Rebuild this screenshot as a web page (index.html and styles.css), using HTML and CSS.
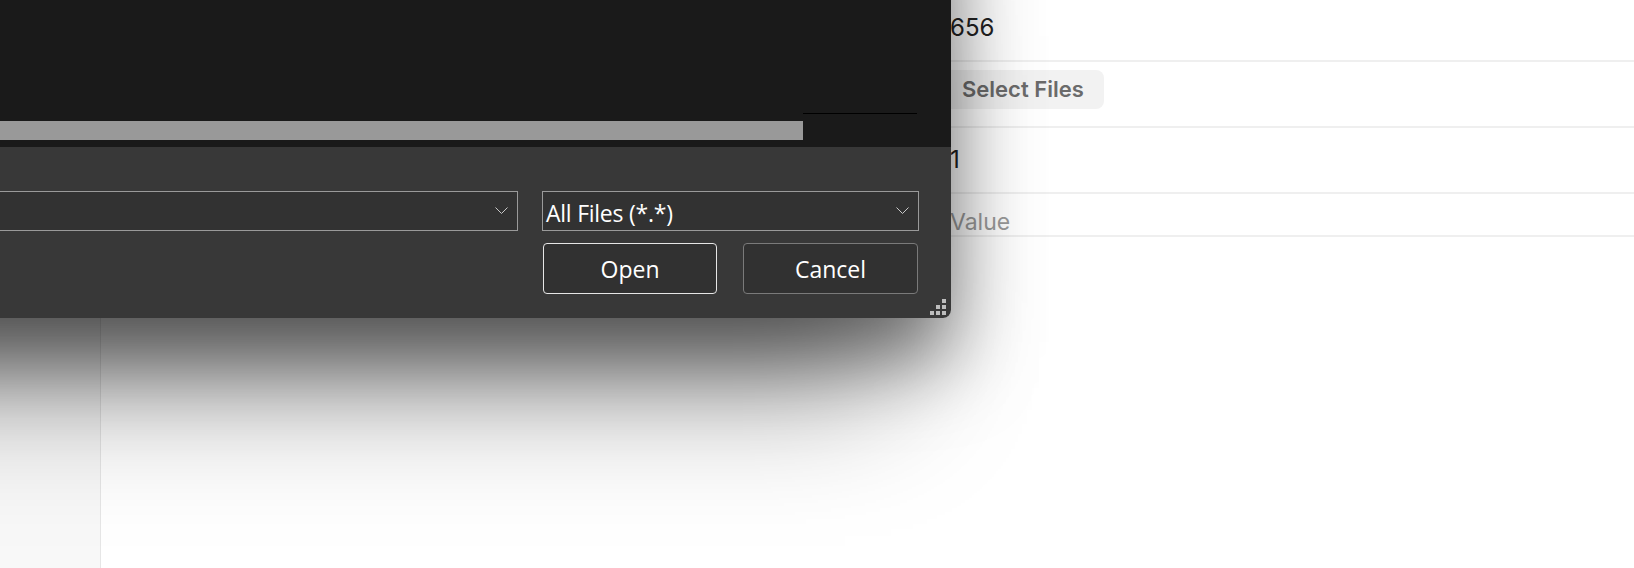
FILE: index.html
```html
<!DOCTYPE html>
<html lang="en">
<head>
<meta charset="utf-8">
<title>Open</title>
<link rel="stylesheet" href="styles.css">
</head>
<body>
<div class="page">
  <aside class="sidebar"></aside>
  <main class="main">
    <div class="field">
      <div class="field-label"></div>
      <div class="field-value field-text">656</div>
    </div>
    <div class="field field-upload">
      <div class="field-label"></div>
      <div class="field-value"><button class="select-btn">Select Files</button></div>
    </div>
    <div class="field field-count">
      <div class="field-label"></div>
      <div class="field-value field-text">1</div>
    </div>
    <div class="field field-input">
      <div class="field-label"></div>
      <div class="field-value field-text placeholder">Value</div>
    </div>
  </main>
</div>

<div class="dialog">
  <div class="file-list">
    <div class="hscroll">
      <div class="hscroll-thumb"></div>
      <div class="hscroll-corner"></div>
    </div>
  </div>
  <div class="dialog-footer">
    <div class="combo-row">
      <div class="combo combo-name">
        <span class="combo-text"></span>
        <svg class="chevron" width="13" height="8" viewBox="0 0 13 8"><polyline points="0.5,0.5 6.5,6.5 12.5,0.5" fill="none" stroke="#c9c9c9" stroke-width="1"/></svg>
      </div>
      <div class="combo combo-type">
        <span class="combo-text">All Files (*.*)</span>
        <svg class="chevron" width="13" height="8" viewBox="0 0 13 8"><polyline points="0.5,0.5 6.5,6.5 12.5,0.5" fill="none" stroke="#c9c9c9" stroke-width="1"/></svg>
      </div>
    </div>
    <div class="button-row">
      <button class="btn btn-default">Open</button>
      <button class="btn">Cancel</button>
    </div>
  </div>
  <svg class="grip" width="16" height="16" viewBox="0 0 16 16">
    <rect x="12" y="0" width="4" height="4" fill="#bdbdbd"/>
    <rect x="6" y="6" width="4" height="4" fill="#bdbdbd"/>
    <rect x="12" y="6" width="4" height="4" fill="#bdbdbd"/>
    <rect x="0" y="12" width="4" height="4" fill="#bdbdbd"/>
    <rect x="6" y="12" width="4" height="4" fill="#bdbdbd"/>
    <rect x="12" y="12" width="4" height="4" fill="#bdbdbd"/>
  </svg>
</div>
</body>
</html>
```
FILE: styles.css
```css
* { box-sizing: border-box; }
html, body {
  margin: 0;
  padding: 0;
  width: 1634px;
  height: 568px;
  overflow: hidden;
  background: #ffffff;
}
body {
  position: relative;
  font-family: Inter, "Noto Sans", sans-serif;
}

/* underlying page */
.page {
  display: flex;
  height: 568px;
}
.sidebar {
  width: 101px;
  flex: none;
  background: #f8f8f8;
  border-right: 1px solid #e6e6e6;
}
.main {
  flex: 1;
  display: flex;
  flex-direction: column;
}
.field {
  display: grid;
  grid-template-columns: 841px 1fr;
  border-bottom: 2px solid #efefef;
  padding: 14px 0 18px;
}
.field-text {
  padding-left: 8px;
  font-size: 24px;
  line-height: 28px;
  color: #222222;
}
.field-upload { padding: 8px 0 17px; }
.field-count { padding: 18px 0 18px; }
.field-input { padding: 16px 0 0; }
.placeholder {
  font-size: 23px;
  line-height: 25px;
  color: #9b9b9b;
}
.select-btn {
  font-family: Inter, "Noto Sans", sans-serif;
  font-size: 22px;
  font-weight: 600;
  line-height: 23px;
  color: #6b6b6b;
  background: #f2f2f2;
  border: none;
  border-radius: 8px;
  padding: 8px 20px;
  margin: 0;
}

/* dialog window */
.dialog {
  position: absolute;
  left: -300px;
  top: -200px;
  width: 1251px;
  height: 518px;
  display: flex;
  flex-direction: column;
  border-bottom-right-radius: 8px;
  overflow: hidden;
  box-shadow: 0 40px 80px rgba(0, 0, 0, 0.5), 0 130px 130px -60px rgba(0, 0, 0, 0.4);
  font-family: "Open Sans", "Noto Sans", sans-serif;
  color: #ffffff;
}
.file-list {
  height: 347px;
  flex: none;
  background: #1a1a1a;
  display: flex;
  flex-direction: column;
  justify-content: flex-end;
}
.hscroll {
  height: 34px;
  display: flex;
  align-items: flex-start;
}
.hscroll-thumb {
  width: 1103px;
  height: 19px;
  margin-top: 8px;
  background: #999999;
}
.hscroll-corner {
  width: 114px;
  border-top: 1px solid #000000;
}
.dialog-footer {
  flex: 1;
  background: #383838;
  padding: 44px 32px 24px 20px;
  display: flex;
  flex-direction: column;
}
.combo-row {
  display: flex;
  gap: 24px;
}
.combo {
  height: 40px;
  border: 1px solid #9a9a9a;
  background: #323232;
  display: flex;
  align-items: center;
  justify-content: space-between;
  padding: 0 9px 0 3px;
}
.combo-name { flex: 1; }
.combo-type { width: 377px; }
.combo-text {
  font-size: 23px;
  line-height: 30px;
  letter-spacing: -0.25px;
  padding-top: 3px;
  white-space: nowrap;
}
.chevron { display: block; flex: none; }
.button-row {
  display: flex;
  justify-content: flex-end;
  gap: 26px;
  margin-top: 12px;
  padding-right: 1px;
}
.btn {
  font-family: "Open Sans", "Noto Sans", sans-serif;
  font-size: 23px;
  line-height: 30px;
  color: #ffffff;
  background: #313131;
  border: 1px solid #7a7a7a;
  border-radius: 4px;
  width: 175px;
  height: 51px;
  padding: 10px 0 9px;
  margin: 0;
}
.btn-default {
  width: 174px;
  border-color: #e6e6e6;
}
.grip {
  position: absolute;
  right: 5px;
  bottom: 3px;
  display: block;
}
```
